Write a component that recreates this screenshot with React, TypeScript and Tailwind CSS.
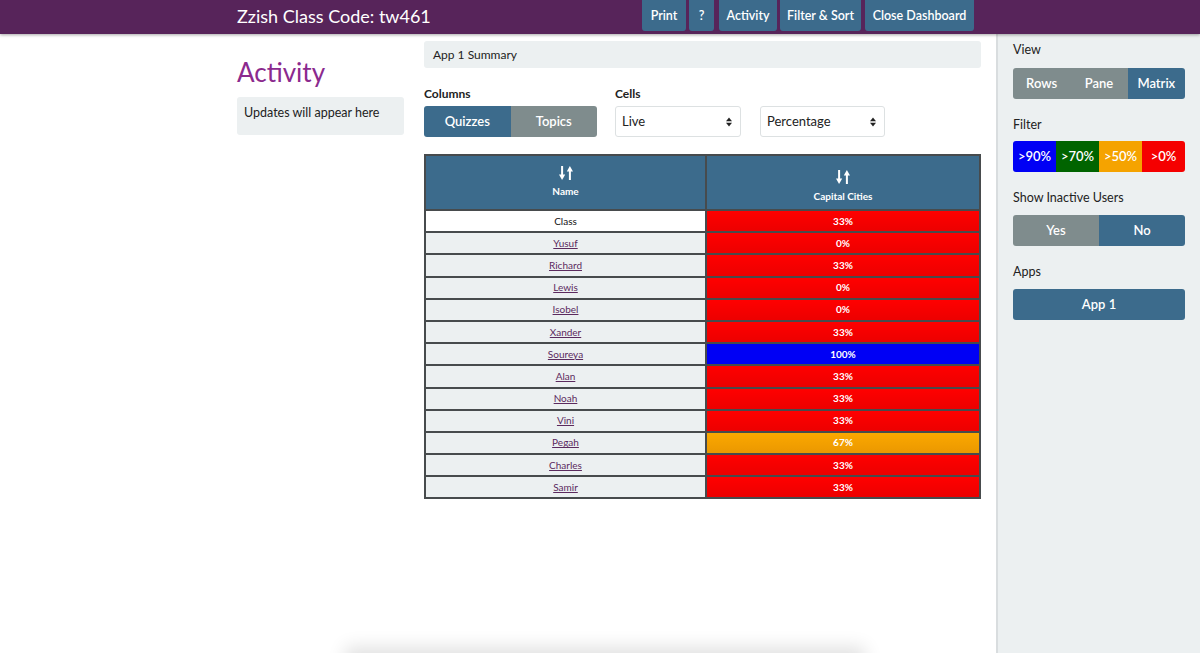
import React from "react";

// ── data ─────────────────────────────────────────────────────────────

type Row = { name: string; score: number; link: boolean };

const ROWS: Row[] = [
  { name: "Class", score: 33, link: false },
  { name: "Yusuf", score: 0, link: true },
  { name: "Richard", score: 33, link: true },
  { name: "Lewis", score: 0, link: true },
  { name: "Isobel", score: 0, link: true },
  { name: "Xander", score: 33, link: true },
  { name: "Soureya", score: 100, link: true },
  { name: "Alan", score: 33, link: true },
  { name: "Noah", score: 33, link: true },
  { name: "Vini", score: 33, link: true },
  { name: "Pegah", score: 67, link: true },
  { name: "Charles", score: 33, link: true },
  { name: "Samir", score: 33, link: true },
];

function scoreClass(score: number) {
  if (score > 90) return "bg-[#0000f5]";
  if (score > 70) return "bg-[#006400]";
  if (score > 50) return "bg-gradient-to-b from-[#fba800] to-[#eb9800]";
  return "bg-gradient-to-b from-[#ff0000] to-[#ec0000]";
}

// ── bits ─────────────────────────────────────────────────────────────

function SortIcon() {
  return (
    <svg viewBox="0 0 14 16" className="h-[16px] w-[14px]" fill="white" aria-hidden>
      <rect x="2.1" y="1" width="2" height="10" />
      <path d="M0 9.5h6.2L3.1 15z" />
      <rect x="9.9" y="5" width="2" height="10" />
      <path d="M7.8 6.5h6.2L10.9 1z" />
    </svg>
  );
}

function SelectArrows() {
  return (
    <svg viewBox="0 0 8 12" className="h-[10px] w-[6px]" fill="#222" aria-hidden>
      <path d="M0 5h8L4 0z" />
      <path d="M0 7h8L4 12z" />
    </svg>
  );
}

function FakeSelect({ label, width }: { label: string; width: string }) {
  return (
    <div
      className={`flex h-[31px] ${width} items-center justify-between rounded-[3px] border border-[#dde1e2] bg-white pl-[6px] pr-[8px] text-[13px] text-[#222]`}
    >
      <span>{label}</span>
      <SelectArrows />
    </div>
  );
}

const navBtn =
  "flex h-[31px] items-center justify-center whitespace-nowrap rounded-b-[3px] bg-[#3c6b8c] pt-[1px] text-[12.5px] font-semibold text-white";

// ── page ─────────────────────────────────────────────────────────────

export default function App() {
  return (
    <div
      className="relative flex h-[653px] w-[1200px] flex-col overflow-hidden bg-white text-[#222]"
      style={{ fontFamily: "Lato, 'Open Sans', sans-serif" }}
    >
      {/* header */}
      <header className="relative z-10 flex h-[34px] shrink-0 items-start bg-[#57245a] shadow-[0_1px_3px_rgba(0,0,0,0.35)]">
        <h1 className="ml-[237px] mt-[5px] w-[405px] text-[18px] leading-[22px] text-white">
          Zzish Class Code: tw461
        </h1>
        <nav className="flex gap-[3px]">
          <button className={`${navBtn} w-[44px]`}>Print</button>
          <button className={`${navBtn} w-[25px]`}>?</button>
          <button className={`${navBtn} ml-[2px] w-[58px]`}>Activity</button>
          <button className={`${navBtn} w-[81px]`}>Filter &amp; Sort</button>
          <button className={`${navBtn} ml-[1px] w-[109px]`}>Close Dashboard</button>
        </nav>
      </header>

      <div className="flex min-h-0 flex-1">
        {/* content */}
        <div className="flex flex-1 gap-[20px] pl-[237px]">
          {/* activity */}
          <aside className="w-[167px] shrink-0">
            <h2 className="mt-[22px] text-[26px] leading-[32px] text-[#8b2a8e]">Activity</h2>
            <div className="mt-[9px] h-[38px] rounded-[3px] bg-[#ecf0f1] px-[7px] pt-[7px] text-[12.5px]">
              Updates will appear here
            </div>
          </aside>

          {/* main */}
          <main className="w-[557px] shrink-0">
            <div className="mt-[7px] flex h-[27px] items-center rounded-[3px] bg-[#ecf0f1] px-[9px] text-[12px]">
              App 1 Summary
            </div>

            <div className="mt-[18px] flex items-start">
              <div>
                <p className="text-[12px] font-bold leading-[15px]">Columns</p>
                <div className="mt-[5px] flex h-[31px] w-[173px] overflow-hidden rounded-[3px] text-[13px] font-semibold text-white">
                  <span className="flex flex-1 items-center justify-center bg-[#3c6b8c]">Quizzes</span>
                  <span className="flex flex-1 items-center justify-center bg-[#7f8c8d]">Topics</span>
                </div>
              </div>
              <div className="ml-[18px]">
                <p className="text-[12px] font-bold leading-[15px]">Cells</p>
                <div className="mt-[5px] flex gap-[19px]">
                  <FakeSelect label="Live" width="w-[126px]" />
                  <FakeSelect label="Percentage" width="w-[125px]" />
                </div>
              </div>
            </div>

            {/* matrix */}
            <table className="mt-[17px] w-[557px] table-fixed border-collapse border-2 border-[#474b4d] text-[10px]">
              <thead>
                <tr className="h-[55px] bg-[#3c6b8c] text-white">
                  <th className="w-[281px] border-2 border-[#474b4d] align-top font-bold">
                    <div className="flex flex-col items-center pt-[9px]">
                      <SortIcon />
                      <span className="mt-[3px]">Name</span>
                    </div>
                  </th>
                  <th className="border-2 border-[#474b4d] align-top font-bold">
                    <div className="flex flex-col items-center pt-[13px]">
                      <SortIcon />
                      <span className="mt-[4px]">Capital Cities</span>
                    </div>
                  </th>
                </tr>
              </thead>
              <tbody>
                {ROWS.map((r) => (
                  <tr key={r.name} className="h-[22.2px]">
                    <td
                      className={`border-2 border-[#474b4d] p-0 text-center ${
                        r.link ? "bg-[#ecf0f1]" : "bg-white"
                      }`}
                    >
                      {r.link ? (
                        <a className="text-[#5b2a5e] underline">{r.name}</a>
                      ) : (
                        <span className="text-[#111]">{r.name}</span>
                      )}
                    </td>
                    <td
                      className={`border-2 border-[#474b4d] p-0 text-center font-bold text-white ${scoreClass(
                        r.score
                      )}`}
                    >
                      {r.score}%
                    </td>
                  </tr>
                ))}
              </tbody>
            </table>
          </main>
        </div>

        {/* settings sidebar */}
        <aside className="w-[204px] shrink-0 border-l-2 border-[#d9dddf] bg-[#ecf0f1] pl-[15px] pr-[15px] text-[12.5px]">
          <p className="mt-[8px] leading-[16px]">View</p>
          <div className="mt-[10px] flex h-[31px] overflow-hidden rounded-[3px] text-[13px] font-semibold text-white">
            <span className="flex flex-1 items-center justify-center bg-[#7f8c8d]">Rows</span>
            <span className="flex flex-1 items-center justify-center bg-[#7f8c8d]">Pane</span>
            <span className="flex flex-1 items-center justify-center bg-[#3c6b8c]">Matrix</span>
          </div>

          <p className="mt-[18px] leading-[16px]">Filter</p>
          <div className="mt-[8px] flex h-[31px] overflow-hidden rounded-[3px] text-[13px] font-semibold text-white">
            <span className="flex flex-1 items-center justify-center bg-[#0000f5]">&gt;90%</span>
            <span className="flex flex-1 items-center justify-center bg-[#006400]">&gt;70%</span>
            <span className="flex flex-1 items-center justify-center bg-[#f5a300]">&gt;50%</span>
            <span className="flex flex-1 items-center justify-center bg-[#f50000]">&gt;0%</span>
          </div>

          <p className="mt-[18px] leading-[16px]">Show Inactive Users</p>
          <div className="mt-[9px] flex h-[31px] overflow-hidden rounded-[3px] text-[13px] font-semibold text-white">
            <span className="flex flex-1 items-center justify-center bg-[#7f8c8d]">Yes</span>
            <span className="flex flex-1 items-center justify-center bg-[#3c6b8c]">No</span>
          </div>

          <p className="mt-[18px] leading-[16px]">Apps</p>
          <div className="mt-[9px] flex h-[31px] items-center justify-center rounded-[3px] bg-[#3c6b8c] text-[13px] font-semibold text-white">
            App 1
          </div>
        </aside>
      </div>

      {/* faint shadow of a panel sitting just below the fold */}
      <div className="pointer-events-none absolute left-[345px] top-[653px] h-[40px] w-[520px] shadow-[0_-6px_18px_rgba(0,0,0,0.12)]" />
    </div>
  );
}
